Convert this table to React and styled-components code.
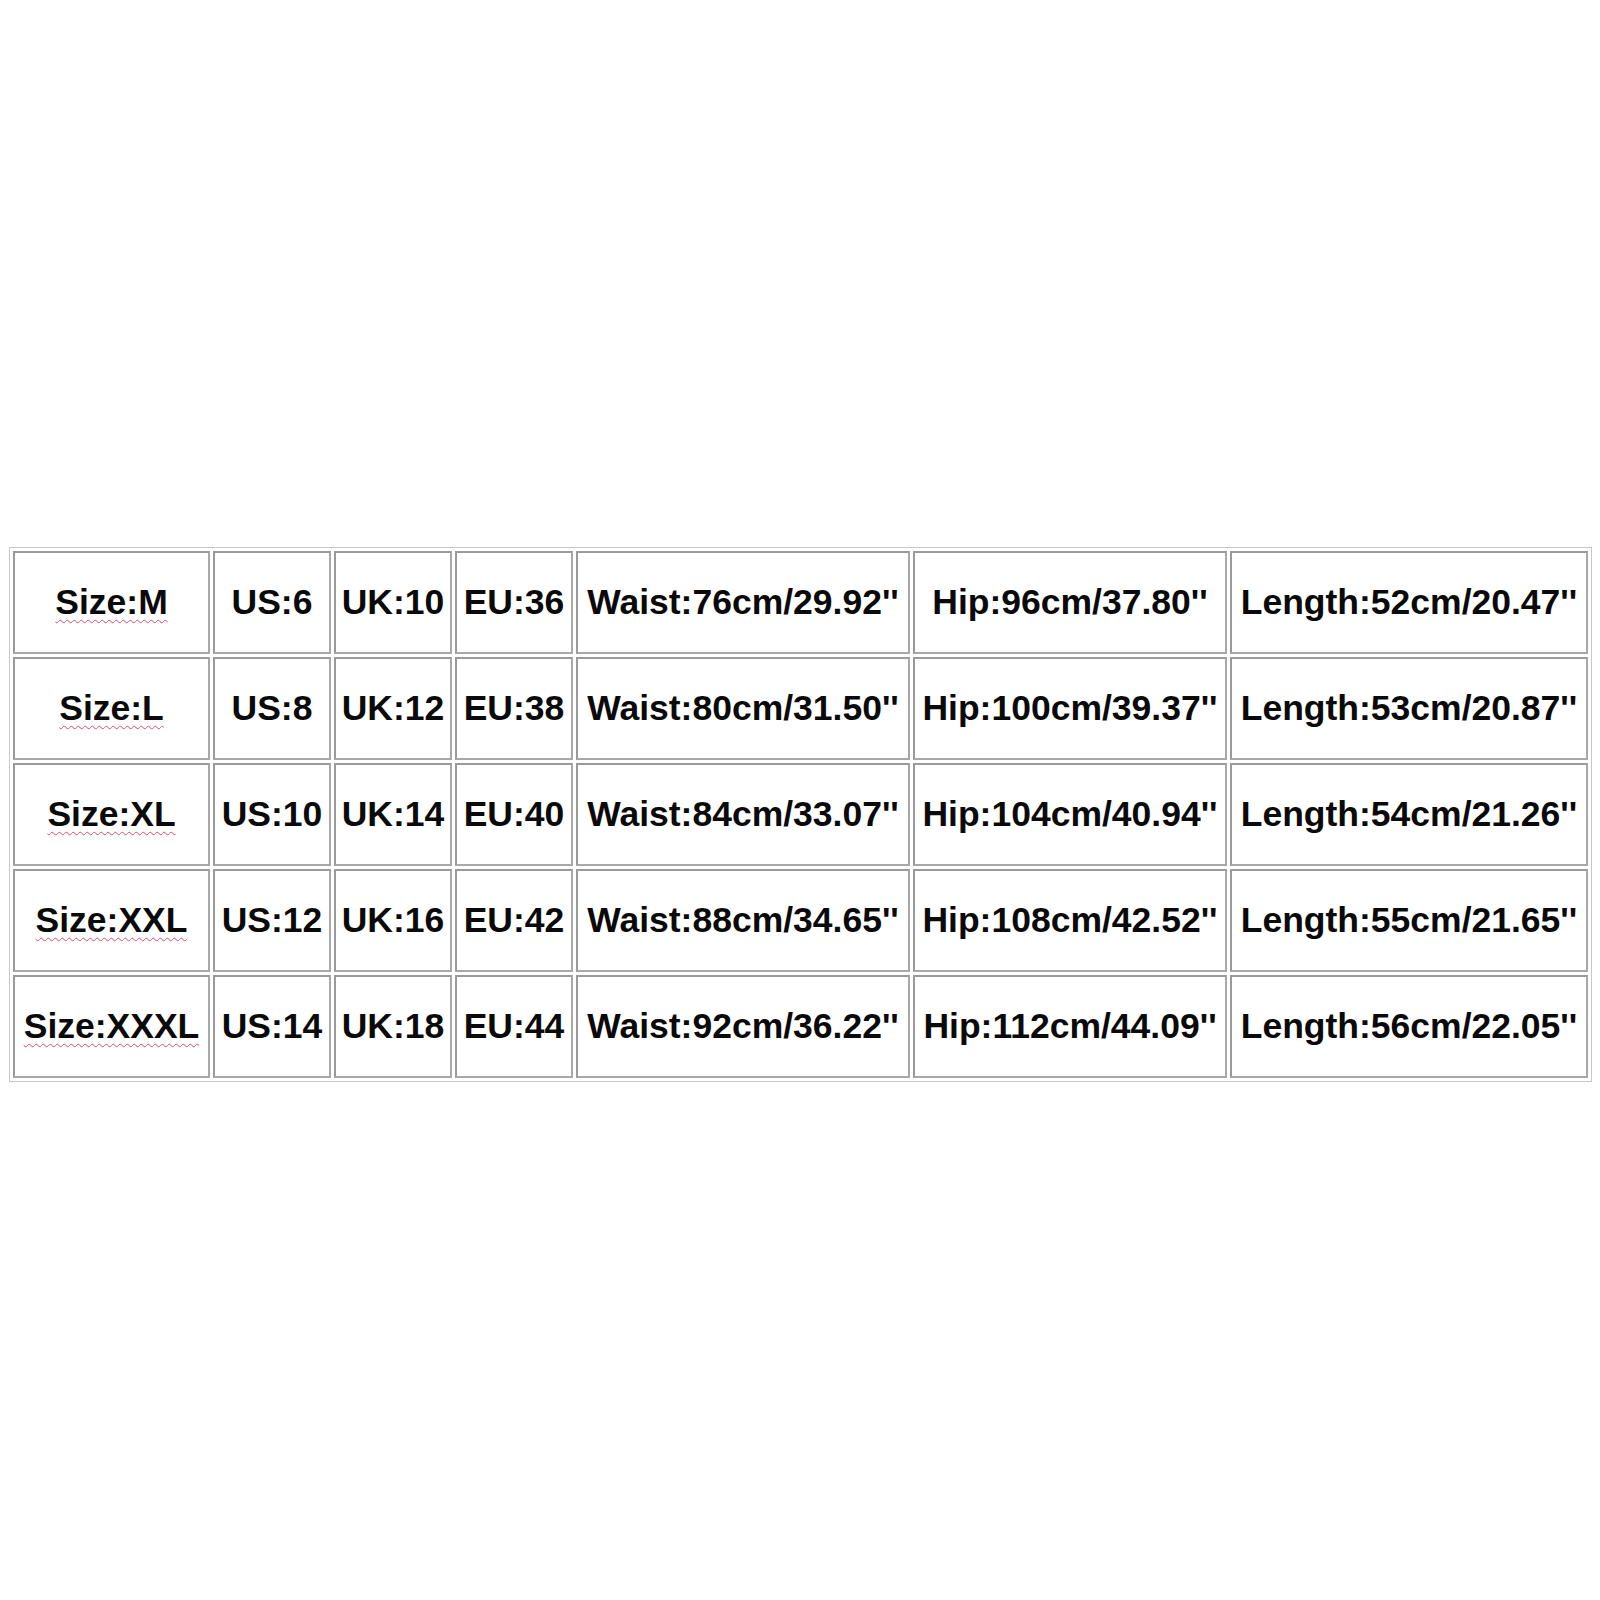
import React from "react";
import styled, { createGlobalStyle } from "styled-components";

const GlobalStyle = createGlobalStyle`
  html, body {
    margin: 0;
    padding: 0;
    background: #ffffff;
  }
  body {
    font-family: "Liberation Sans", Arial, sans-serif;
  }
`;

const Page = styled.div`
  width: 1600px;
  height: 1600px;
  box-sizing: border-box;
  padding: 547px 0 0 9px;
  background: #fff;
`;

const Table = styled.table`
  width: 1583px;
  table-layout: fixed;
  border-collapse: separate;
  border-spacing: 3px;
  border: 1px solid #c8c8c8;
`;

const Cell = styled.td`
  height: 103px;
  box-sizing: border-box;
  border: 2px solid #9a9a9a;
  border-right-color: #a8a8a8;
  border-bottom-color: #a8a8a8;
  padding: 0;
  text-align: center;
  vertical-align: middle;
  white-space: nowrap;
  overflow: hidden;
  font-family: "Liberation Sans", Arial, sans-serif;
  font-weight: 700;
  font-size: 35.5px;
  color: #0a0a0a;
`;

const SizeName = styled.span`
  text-decoration-line: underline;
  text-decoration-style: wavy;
  text-decoration-color: #d2506e;
  text-decoration-thickness: 1px;
  text-underline-offset: 5px;
`;

const widths = [197, 118, 118, 118, 334, 314, 358];

const rows = [
  ["Size:M", "US:6", "UK:10", "EU:36", "Waist:76cm/29.92''", "Hip:96cm/37.80''", "Length:52cm/20.47''"],
  ["Size:L", "US:8", "UK:12", "EU:38", "Waist:80cm/31.50''", "Hip:100cm/39.37''", "Length:53cm/20.87''"],
  ["Size:XL", "US:10", "UK:14", "EU:40", "Waist:84cm/33.07''", "Hip:104cm/40.94''", "Length:54cm/21.26''"],
  ["Size:XXL", "US:12", "UK:16", "EU:42", "Waist:88cm/34.65''", "Hip:108cm/42.52''", "Length:55cm/21.65''"],
  ["Size:XXXL", "US:14", "UK:18", "EU:44", "Waist:92cm/36.22''", "Hip:112cm/44.09''", "Length:56cm/22.05''"],
];

export default function App() {
  return (
    <>
      <GlobalStyle />
      <Page>
        <Table>
          <colgroup>
            {widths.map((w, i) => (
              <col key={i} style={{ width: w }} />
            ))}
          </colgroup>
          <tbody>
            {rows.map((row) => (
              <tr key={row[0]}>
                {row.map((text, i) => (
                  <Cell key={i}>
                    {i === 0 ? <SizeName>{text}</SizeName> : text}
                  </Cell>
                ))}
              </tr>
            ))}
          </tbody>
        </Table>
      </Page>
    </>
  );
}
